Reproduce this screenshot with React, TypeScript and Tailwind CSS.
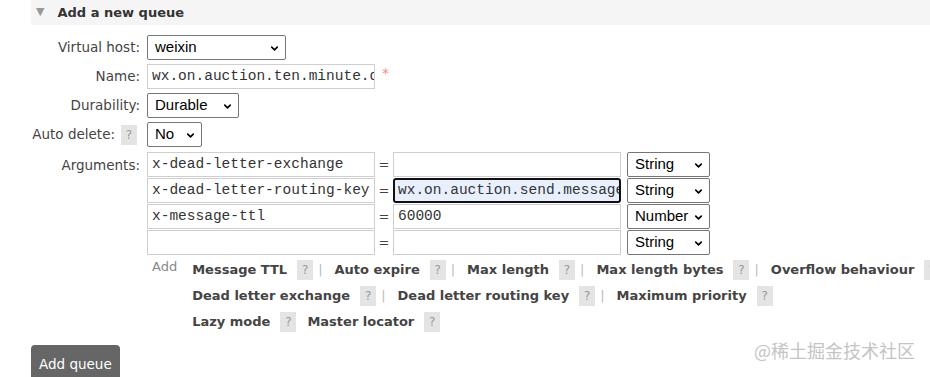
import { ChevronDown } from 'lucide-react';

const SANS = { fontFamily: '"DejaVu Sans", Verdana, sans-serif' };

function Select({ value, width }: { value: string; width: number }) {
  return (
    <div
      className="relative flex items-center h-[25px] border border-[#767676] rounded-[2px] bg-white pl-[7px] text-[15px] text-black"
      style={{ width, fontFamily: '"Liberation Sans", Arial, sans-serif' }}
    >
      <span>{value}</span>
      <ChevronDown className="absolute right-[5px] top-[7px]" size={11} strokeWidth={3.5} />
    </div>
  );
}

function TextInput({ value, width, focused }: { value?: string; width: number; focused?: boolean }) {
  const base = 'flex items-center h-[25px] overflow-hidden whitespace-nowrap text-[14.5px] text-[#333]';
  const look = focused
    ? 'border-2 border-[#111] rounded-[3px] bg-[#e8f0fe] pl-[3px]'
    : 'border border-[#cfcfcf] bg-white pl-[4px]';
  return (
    <div className={`${base} ${look}`} style={{ width, fontFamily: '"Liberation Mono", "Courier New", monospace' }}>
      <span className="shrink-0">{value}</span>
    </div>
  );
}

function Help() {
  return (
    <span className="inline-flex items-center justify-center w-[16px] h-[20px] bg-[#e4e4e4] text-[#999] text-[12px] font-normal">
      ?
    </span>
  );
}

function Label({ children, pr = 'pr-[7px]' }: { children: React.ReactNode; pr?: string }) {
  return (
    <div className={`w-[116px] ${pr} flex justify-end items-center gap-[6px] text-[13.5px] text-[#444]`} style={SANS}>
      {children}
    </div>
  );
}

const ARGS = [
  { key: 'x-dead-letter-exchange', value: '', type: 'String' },
  { key: 'x-dead-letter-routing-key', value: 'wx.on.auction.send.message', type: 'String', focused: true },
  { key: 'x-message-ttl', value: '60000', type: 'Number' },
  { key: '', value: '', type: 'String' },
];

function Link({ label, sep = true }: { label: string; sep?: boolean }) {
  return (
    <>
      <span className="font-bold text-[#444]">{label}</span>
      <span className="ml-[10px]">
        <Help />
      </span>
      {sep && <span className="ml-[5px] mr-[12px] text-[#bbb] font-normal">|</span>}
    </>
  );
}

export default function App() {
  return (
    <div className="relative w-[930px] h-[377px] overflow-hidden bg-white" style={SANS}>
      {/* header */}
      <div className="ml-[31px] h-[25px] bg-[#f5f5f5] flex items-center pl-[5px]">
        <span className="text-[#999] text-[11px] mr-[13px]">▼</span>
        <span className="text-[13px] font-bold text-[#333]">Add a new queue</span>
      </div>

      <div className="ml-[31px] mt-[10px] flex flex-col">
        <div className="flex h-[25px]">
          <Label>Virtual host:</Label>
          <Select value="weixin" width={139} />
        </div>
        <div className="flex h-[25px] mt-[4px]">
          <Label>Name:</Label>
          <TextInput value="wx.on.auction.ten.minute.queue" width={228} />
          <span className="ml-[7px] text-[#f28b8b] text-[14px] leading-[18px]">*</span>
        </div>
        <div className="flex h-[25px] mt-[4px]">
          <Label>Durability:</Label>
          <Select value="Durable" width={92} />
        </div>
        <div className="flex h-[25px] mt-[4px]">
          <Label pr="pr-[10px]">
            <span>Auto delete:</span>
            <Help />
          </Label>
          <Select value="No" width={55} />
        </div>

        <div className="flex mt-[5px]">
          <div className="w-[116px] pr-[7px] pt-[3px] text-right text-[13.5px] text-[#444]">Arguments:</div>
          <div className="flex flex-col gap-[1px]">
            {ARGS.map((a, i) => (
              <div key={i} className="flex items-center h-[25px]">
                <TextInput value={a.key} width={228} />
                <span className="w-[18px] text-center text-[13px] text-[#444]">=</span>
                <TextInput value={a.value} width={228} focused={a.focused} />
                <div className="ml-[6px]">
                  <Select value={a.type} width={83} />
                </div>
              </div>
            ))}
          </div>
        </div>

        <div className="flex mt-[5px] ml-[121px] whitespace-nowrap text-[13px]">
          <span className="text-[#888] mr-[15px] -mt-[3px]">Add</span>
          <div className="flex flex-col gap-[6px]">
            <div className="flex items-center h-[20px]">
              <Link label="Message TTL" />
              <Link label="Auto expire" />
              <Link label="Max length" />
              <Link label="Max length bytes" />
              <Link label="Overflow behaviour" sep={false} />
            </div>
            <div className="flex items-center h-[20px]">
              <Link label="Dead letter exchange" />
              <Link label="Dead letter routing key" />
              <Link label="Maximum priority" sep={false} />
            </div>
            <div className="flex items-center h-[20px]">
              <span className="font-bold text-[#444]">Lazy mode</span>
              <span className="ml-[10px] mr-[11px]">
                <Help />
              </span>
              <span className="font-bold text-[#444]">Master locator</span>
              <span className="ml-[10px]">
                <Help />
              </span>
            </div>
          </div>
        </div>
      </div>

      <div className="flex items-start justify-between ml-[31px] mt-[13px] pr-[15px]">
        <button className="h-[38px] px-[8px] bg-[#666] text-white text-[13.5px] rounded-[4px] flex items-center">
          Add queue
        </button>
        <span
          className="text-[18px] leading-[24px] text-[#c4c4c4] -mt-[7px]"
          style={{ fontFamily: '"Noto Sans CJK SC", "Noto Sans", sans-serif' }}
        >
          @稀土掘金技术社区
        </span>
      </div>
    </div>
  );
}
